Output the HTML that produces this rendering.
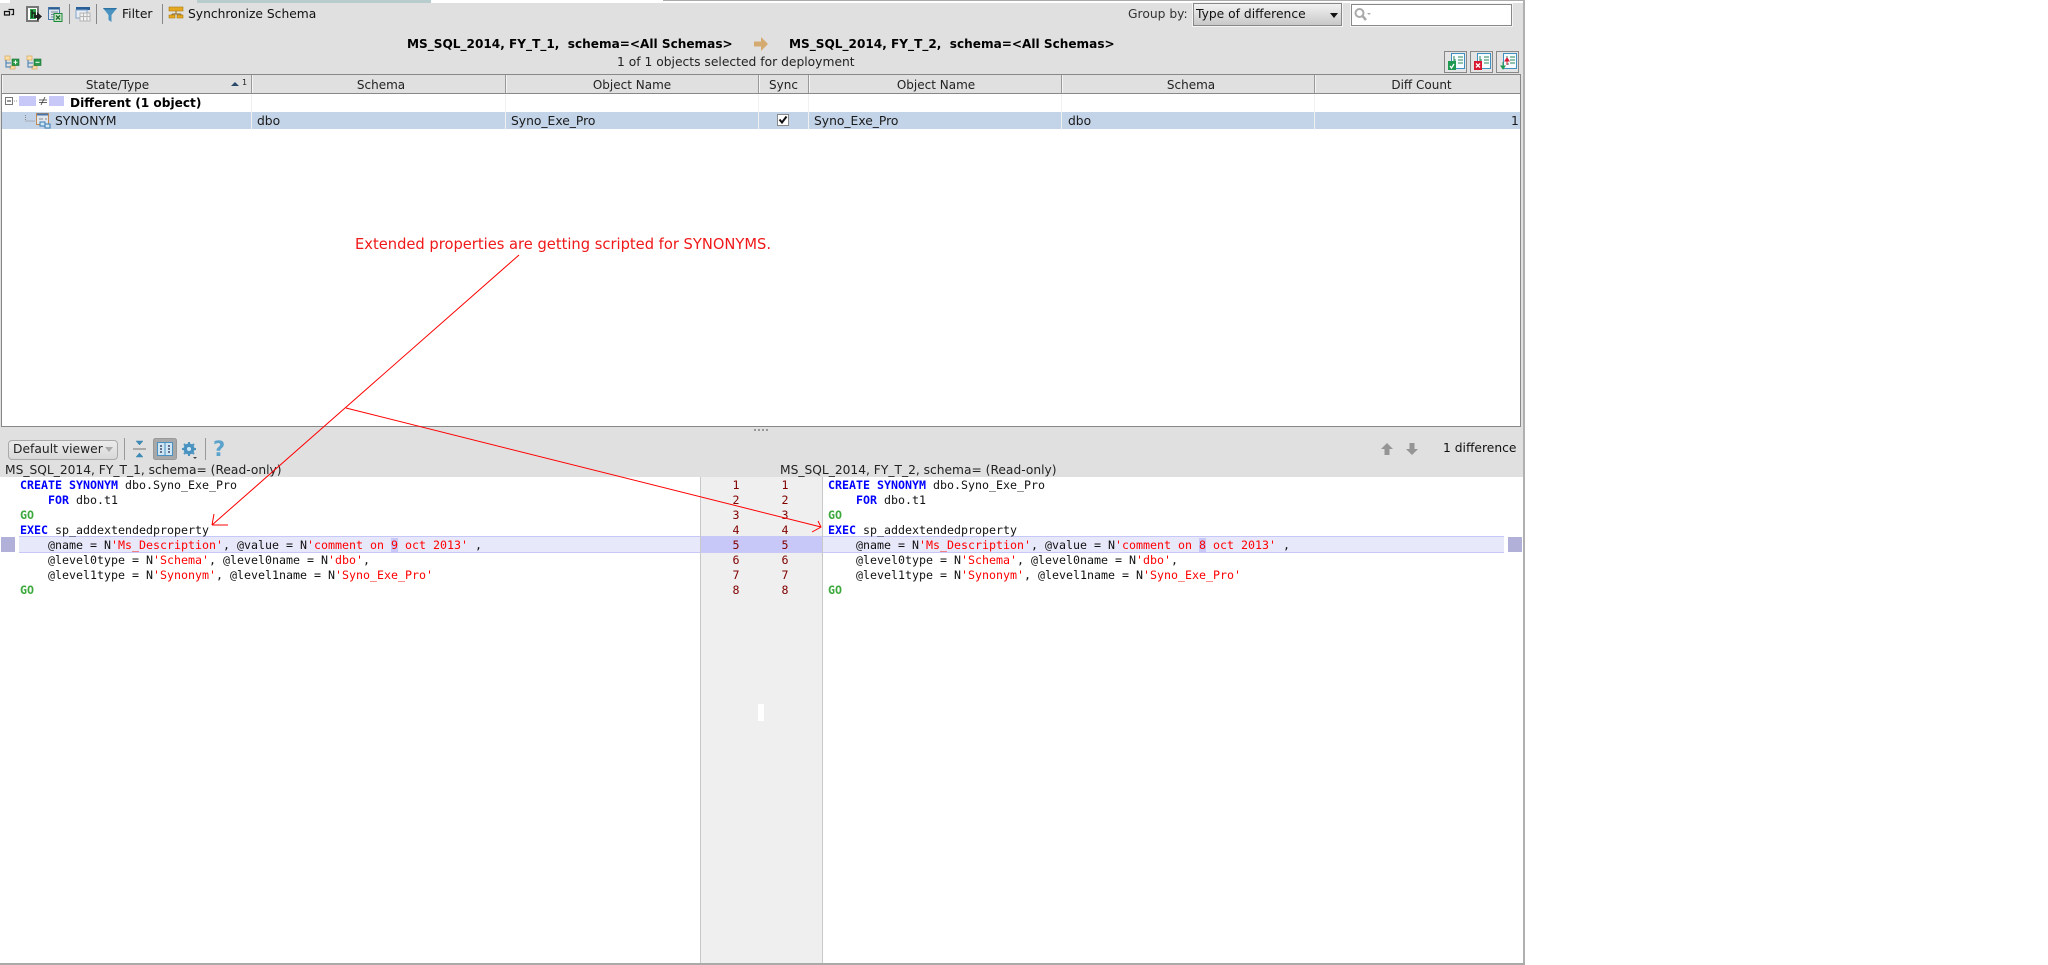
<!DOCTYPE html>
<html><head><meta charset="utf-8"><style>
html,body{margin:0;padding:0;background:#fff;width:2048px;height:965px;overflow:hidden}
div,span.a,svg.a{position:absolute}
.t{position:absolute;font-family:"DejaVu Sans",sans-serif;font-size:12px;line-height:18px;height:18px;white-space:pre;color:#1a1a1a}
.b{font-weight:bold;color:#000}
.h{position:absolute;top:75px;height:18px;background:#e0e0e0;border-right:1px solid #999;box-shadow:inset 1px 0 #f4f4f4;text-align:center;font-family:"DejaVu Sans",sans-serif;font-size:12px;line-height:21px;color:#222}
.c{position:absolute;font-family:"DejaVu Sans Mono","Liberation Mono",monospace;font-size:11.63px;line-height:15px;height:15px;white-space:pre;color:#111}
.k{color:#00f;font-weight:bold}.g{color:#3aa83a;font-weight:bold}.s{color:#f00}.m{background:#c8c8f8}
.n{position:absolute;font-family:"DejaVu Sans Mono",monospace;font-size:11.63px;line-height:15px;color:#800000;width:10px;text-align:center}
.v{position:absolute;width:1px;background:#f1f1f1}
</style></head><body>
<div style="left:0;top:0;width:2048px;height:965px;background:#fff"></div>
<div style="left:663px;top:0;width:862px;height:1px;background:#aaa"></div>
<div style="left:10px;top:0;width:187px;height:3px;background:#e0e0e0"></div>
<div style="left:197px;top:0;width:234px;height:3px;background:#b7cccc"></div>
<div style="left:0;top:3px;width:1523px;height:425px;background:#e0e0e0"></div>
<div style="left:1523px;top:0;width:2px;height:965px;background:#b0b0b0"></div>
<div style="left:0;top:963px;width:1525px;height:2px;background:#aaa"></div>

<!-- toolbar icons -->
<svg class="a" style="left:0;top:0" width="330" height="74" viewBox="0 0 330 74" fill="none">
<path d="M8.500 9.500h5v5h-2M4.500 11.500h5v3.500h-5z" stroke="#111" stroke-width="1.200"/>
<rect x="27" y="7" width="11" height="14" fill="#fff" stroke="#777" stroke-width="2"/>
<rect x="30" y="9" width="6" height="10" fill="#2fa14a"/>
<path d="M32 10v8M32 13h3v4" stroke="#111" stroke-width="1.200"/>
<path d="M34 15h3v-3l5 4.500-5 4.500v-3h-3z" fill="#222"/>
<rect x="48.500" y="7.500" width="11" height="12" fill="#dde5ee" stroke="#4a76a8"/>
<path d="M49 8.500h10" stroke="#2c5d93" stroke-width="2"/>
<path d="M51 12h7M51 14.500h7M51 17h7" stroke="#789"/>
<rect x="54" y="13.500" width="8" height="8" fill="#c5e3c5" stroke="#1c8a3c"/>
<path d="M56 15.500l4 4M60 15.500l-4 4" stroke="#1c6a2c" stroke-width="1.300"/>
<rect x="69" y="4" width="1" height="20" fill="#888"/>
<rect x="76" y="7" width="14" height="3" fill="#295f99"/>
<rect x="76" y="10" width="11" height="8" fill="#e8eef5" stroke="#7fa3c8"/>
<rect x="80" y="13" width="10" height="8" fill="#f2f2f2" stroke="#b5b5b5"/>
<path d="M83.500 13v8M87 13v8M80 16.500h10" stroke="#b5b5b5"/>
<rect x="96" y="4" width="1" height="20" fill="#888"/>
<path d="M103 8h14l-5.500 7v7l-3-2v-5z" fill="#4a93c0"/>
<path d="M103 8h14l-1 1.500h-12z" fill="#2b73a3"/>
<rect x="162" y="4" width="1" height="20" fill="#888"/>
<rect x="169" y="7" width="14" height="4" fill="#e6a820" stroke="#a87a10" stroke-width=".6"/>
<path d="M176 11v3M172 14h9M172 14v1M181 14v1" stroke="#8a6a20"/>
<rect x="169" y="15" width="6" height="3" fill="#e6a820" stroke="#a87a10" stroke-width=".6"/>
<rect x="177" y="15" width="6" height="3" fill="#e6a820" stroke="#a87a10" stroke-width=".6"/>
<!-- tree expand icons -->
<path d="M5 56h5v4H5zM10 66h5v3H10z" fill="#fde0a8" stroke="#d8a860" stroke-width=".7"/>
<path d="M6 60v7h5M6 63h5" stroke="#3a7ab0"/>
<rect x="12" y="59" width="7" height="6.500" fill="#2a9a4a" stroke="#1a7030" stroke-width=".6"/>
<path d="M13.500 62.300h4M15.500 60.300v4" stroke="#fff"/>
<path d="M27 56h5v4h-5zM32 66h5v3h-5z" fill="#fde0a8" stroke="#d8a860" stroke-width=".7"/>
<path d="M28 60v7h5M28 63h5" stroke="#3a7ab0"/>
<rect x="34" y="59" width="7" height="6.500" fill="#2a9a4a" stroke="#1a7030" stroke-width=".6"/>
<path d="M35.500 62.300h4" stroke="#fff"/>
</svg>

<div class="t" style="left:122px;top:5px;font-size:12.300px;color:#111">Filter</div>
<div class="t" style="left:188px;top:5px;font-size:12.300px;color:#111">Synchronize Schema</div>
<div class="t" style="left:1128px;top:5px;font-size:12.300px;color:#333">Group by:</div>
<div style="left:1193px;top:3px;width:147px;height:21px;border:1px solid #888;background:linear-gradient(#f2f2f2,#c8c8c8);box-shadow:0 0 0 1px #f4f4f4"></div>
<div class="t" style="left:1196px;top:5px;font-size:12.300px;color:#111">Type of difference</div>
<svg class="a" style="left:1329px;top:12px" width="10" height="6"><path d="M1 1h8L5 6z" fill="#111"/></svg>
<div style="left:1351px;top:4px;width:159px;height:20px;border:1px solid #888;background:#fff;box-shadow:0 0 0 1px #f4f4f4"></div>
<svg class="a" style="left:1353px;top:7px" width="20" height="15" fill="none"><circle cx="6.500" cy="6" r="4" stroke="#aaa" stroke-width="2"/><path d="M9.500 9l3.500 4" stroke="#aaa" stroke-width="2.500"/><path d="M14 6h4l-2 2z" fill="#aaa"/></svg>

<div class="t b" style="left:407px;top:35px;font-size:12.100px">MS_SQL_2014, FY_T_1,  schema=&lt;All Schemas&gt;</div>
<svg class="a" style="left:754px;top:37px" width="15" height="14"><path d="M0 4.500h7V0l7 7-7 7V9.500H0z" fill="#d5aa70"/></svg>
<div class="t b" style="left:789px;top:35px;font-size:12.100px">MS_SQL_2014, FY_T_2,  schema=&lt;All Schemas&gt;</div>
<div class="t" style="left:617px;top:53px;font-size:12.300px;color:#222">1 of 1 objects selected for deployment</div>

<!-- deploy buttons -->
<svg class="a" style="left:1443px;top:50px" width="78" height="24" fill="none">
<g fill="#e4e4e4" stroke="#888"><rect x="1.500" y="1.500" width="22" height="21"/><rect x="27.500" y="1.500" width="22" height="21"/><rect x="53.500" y="1.500" width="22" height="21"/></g>
<g fill="#f6fbff" stroke="#3f8fc0"><rect x="8.500" y="3.500" width="13" height="15"/><rect x="34.500" y="3.500" width="13" height="15"/><rect x="60.500" y="3.500" width="13" height="15"/></g>
<path d="M11 6v8h2M11 10h2M15 7h5M15 10h5M15 13h5M37 6v8h2M37 10h2M41 7h5M41 10h5M41 13h5M64 6v8h2M64 10h2M67 7h5M67 10h5M67 13h5" stroke="#2a8a5a"/>
<rect x="5" y="11" width="8" height="9" fill="#1f9a50"/><path d="M7 16l1.500 2 2.500-4" stroke="#fff" stroke-width="1.300"/>
<rect x="31" y="11" width="8" height="9" fill="#d81830"/><path d="M33 13.500l4 4M37 13.500l-4 4" stroke="#fff" stroke-width="1.300"/>
<path d="M60 12v6M58 16h4l-2 3z" fill="#1f9a50" stroke="#1f9a50"/><path d="M64 15v-6M62 11h4l-2-3z" fill="#d81830" stroke="#d81830"/>
</svg>

<!-- table -->
<div style="left:1px;top:74px;width:1518px;height:351px;background:#fff;border:1px solid #888;box-sizing:content-box"></div>
<div style="left:2px;top:93px;width:1518px;height:1px;background:#888"></div>
<div class="h" style="left:2px;width:249px;text-indent:-18px">State/Type</div>
<div class="h" style="left:252px;width:253px;text-indent:5px">Schema</div>
<div class="h" style="left:506px;width:252px">Object Name</div>
<div class="h" style="left:759px;width:49px">Sync</div>
<div class="h" style="left:809px;width:252px;text-indent:2px">Object Name</div>
<div class="h" style="left:1062px;width:252px;text-indent:6px">Schema</div>
<div class="h" style="left:1315px;width:205px;border-right:0;text-indent:8px">Diff Count</div>
<svg class="a" style="left:231px;top:78px" width="16" height="11"><path d="M0 8h8L4 4z" fill="#2a4a6a"/><text x="11" y="7" font-family="DejaVu Sans" font-size="8" fill="#222">1</text></svg>
<div style="left:2px;top:112px;width:1518px;height:17px;background:#c3d3e8"></div>
<div class="v" style="left:251px;top:94px;height:36px"></div>
<div class="v" style="left:505px;top:94px;height:36px"></div>
<div class="v" style="left:758px;top:94px;height:36px"></div>
<div class="v" style="left:808px;top:94px;height:36px"></div>
<div class="v" style="left:1061px;top:94px;height:36px"></div>
<div class="v" style="left:1314px;top:94px;height:36px"></div>

<svg class="a" style="left:4px;top:95px" width="60" height="34" fill="none">
<rect x="1.500" y="2.500" width="7" height="7" fill="#fff" stroke="#777"/><path d="M3 6h4" stroke="#333"/>
<path d="M10 6h4" stroke="#999" stroke-dasharray="1 1"/>
<rect x="15" y="1" width="17" height="10" fill="#c8c8f8"/>
<rect x="45" y="1" width="17" height="10" fill="#c8c8f8"/>
<path d="M35 5h8M35 7.500h8M37 10l4-8" stroke="#333" stroke-width=".8"/>
<path d="M21.500 20v6h9" stroke="#888" stroke-dasharray="1 1"/>
</svg>
<svg class="a" style="left:36px;top:113px" width="15" height="16" fill="none">
<rect x=".5" y=".5" width="12" height="11" fill="#dfe6ee" stroke="#c08a50"/><path d="M1 1.500h11" stroke="#4a76a8" stroke-width="2"/>
<path d="M3 6h4M9 6h2" stroke="#888"/>
<rect x="4" y="9" width="5" height="4" fill="#cfe6f5" stroke="#3a7ab0"/><rect x="9" y="11" width="5" height="4" fill="#cfe6f5" stroke="#3a7ab0"/>
</svg>
<div class="t b" style="left:70px;top:94px;font-size:12.150px">Different (1 object)</div>
<div class="t" style="left:55px;top:112px;font-size:12.300px">SYNONYM</div>
<div class="t" style="left:257px;top:112px;font-size:12.300px">dbo</div>
<div class="t" style="left:511px;top:112px;font-size:12.300px">Syno_Exe_Pro</div>
<svg class="a" style="left:777px;top:114px" width="13" height="13" fill="none"><rect x=".5" y=".5" width="11" height="11" fill="#fff" stroke="#888"/><path d="M2.500 5.500l2.500 3 4.500-6" stroke="#111" stroke-width="2"/></svg>
<div class="t" style="left:814px;top:112px;font-size:12.300px">Syno_Exe_Pro</div>
<div class="t" style="left:1068px;top:112px;font-size:12.300px">dbo</div>
<div class="t" style="left:1511px;top:112px;font-size:12.300px">1</div>

<!-- lower toolbar -->
<div style="left:0;top:428px;width:1523px;height:49px;background:#e0e0e0"></div>
<svg class="a" style="left:754px;top:429px" width="16" height="3"><path d="M0 1h2M4 1h2M8 1h2M12 1h2" stroke="#999" stroke-width="2"/></svg>
<div style="left:8px;top:440px;width:108px;height:18px;border:1px solid #aaa;border-radius:4px;background:linear-gradient(#ececec,#d8d8d8)"></div>
<div class="t" style="left:13px;top:440px;font-size:12.300px;color:#222">Default viewer</div>
<svg class="a" style="left:105px;top:447px" width="10" height="6"><path d="M0 0h8L4 5z" fill="#aaa"/></svg>
<svg class="a" style="left:120px;top:436px" width="110" height="26" fill="none">
<rect x="4" y="2" width="1" height="22" fill="#999"/>
<path d="M13 13h13" stroke="#999" stroke-width="1.500"/>
<path d="M16 5l3.500 4L23 5z" fill="#3c8ab5" stroke="#3c8ab5" stroke-width=".5"/>
<path d="M16 21l3.500-4 3.500 4z" fill="#3c8ab5" stroke="#3c8ab5" stroke-width=".5"/>
<rect x="33.500" y="2.500" width="23" height="21" rx="2" fill="#a8a8a8" stroke="#999"/>
<rect x="37.500" y="6.500" width="15" height="13" fill="#cfe6f5" stroke="#4a90c0"/>
<path d="M45 7v12" stroke="#4a90c0"/>
<path d="M41 9v8M49 9v8" stroke="#224" stroke-width="1.200" stroke-dasharray="2 1"/>
<circle cx="69" cy="13" r="4.500" fill="#4a93c0" stroke="#4a93c0" stroke-width="2"/>
<path d="M69 6v14M62 13h14M64 8l10 10M74 8l-10 10" stroke="#4a93c0" stroke-width="2"/>
<circle cx="69" cy="13" r="2" fill="#cfe6f5"/>
<path d="M73 21h4l-2 2z" fill="#444"/>
<rect x="85" y="2" width="1" height="22" fill="#999"/>
</svg>
<div class="t" style="left:213px;top:438px;font-size:21px;line-height:23px;height:23px;font-weight:bold;color:#5ba3cc">?</div>
<svg class="a" style="left:1380px;top:442px" width="40" height="14"><path d="M7 1l6 6H9.500v6h-5V7H1z" fill="#959595"/><path d="M32 13l6-6h-3.500V1h-5v6H26z" fill="#959595"/></svg>
<div class="t" style="left:1443px;top:439px;font-size:12.300px;color:#111">1 difference</div>
<div class="t" style="left:5px;top:461px;font-size:12.250px;color:#222">MS_SQL_2014, FY_T_1, schema= (Read-only)</div>
<div class="t" style="left:780px;top:461px;font-size:12.250px;color:#222">MS_SQL_2014, FY_T_2, schema= (Read-only)</div>

<!-- gutter -->
<div style="left:700px;top:477px;height:486px;background:#efefef;border-left:1px solid #c8c8c8;border-right:1px solid #c8c8c8;box-sizing:border-box;width:123px"></div>
<div style="left:19px;top:536px;width:681px;height:15px;background:#e8e8fb;border-top:1px solid #c8c8f8;border-bottom:1px solid #c8c8f8"></div>
<div style="left:823px;top:536px;width:681px;height:15px;background:#e8e8fb;border-top:1px solid #c8c8f8;border-bottom:1px solid #c8c8f8"></div>
<div style="left:701px;top:536px;width:121px;height:17px;background:#c8c8f8"></div>
<div style="left:1px;top:537px;width:14px;height:15px;background:#b0b0d8"></div>
<div style="left:1508px;top:537px;width:14px;height:15px;background:#b0b0d8"></div>
<div style="left:758px;top:704px;width:6px;height:17px;background:#fff"></div>

<div class="n" style="left:731px;top:478px">1</div><div class="n" style="left:780px;top:478px">1</div>
<div class="n" style="left:731px;top:493px">2</div><div class="n" style="left:780px;top:493px">2</div>
<div class="n" style="left:731px;top:508px">3</div><div class="n" style="left:780px;top:508px">3</div>
<div class="n" style="left:731px;top:523px">4</div><div class="n" style="left:780px;top:523px">4</div>
<div class="n" style="left:731px;top:538px">5</div><div class="n" style="left:780px;top:538px">5</div>
<div class="n" style="left:731px;top:553px">6</div><div class="n" style="left:780px;top:553px">6</div>
<div class="n" style="left:731px;top:568px">7</div><div class="n" style="left:780px;top:568px">7</div>
<div class="n" style="left:731px;top:583px">8</div><div class="n" style="left:780px;top:583px">8</div>

<!-- code left -->
<div class="c" style="left:20px;top:478px"><span class="k">CREATE SYNONYM</span> dbo.Syno_Exe_Pro</div>
<div class="c" style="left:20px;top:493px">    <span class="k">FOR</span> dbo.t1</div>
<div class="c" style="left:20px;top:508px"><span class="g">GO</span></div>
<div class="c" style="left:20px;top:523px"><span class="k">EXEC</span> sp_addextendedproperty</div>
<div class="c" style="left:20px;top:538px">    @name = N<span class="s">'Ms_Description'</span>, @value = N<span class="s">'comment on <span class="m">9</span> oct 2013'</span> ,</div>
<div class="c" style="left:20px;top:553px">    @level0type = N<span class="s">'Schema'</span>, @level0name = N<span class="s">'dbo'</span>,</div>
<div class="c" style="left:20px;top:568px">    @level1type = N<span class="s">'Synonym'</span>, @level1name = N<span class="s">'Syno_Exe_Pro'</span></div>
<div class="c" style="left:20px;top:583px"><span class="g">GO</span></div>
<!-- code right -->
<div class="c" style="left:828px;top:478px"><span class="k">CREATE SYNONYM</span> dbo.Syno_Exe_Pro</div>
<div class="c" style="left:828px;top:493px">    <span class="k">FOR</span> dbo.t1</div>
<div class="c" style="left:828px;top:508px"><span class="g">GO</span></div>
<div class="c" style="left:828px;top:523px"><span class="k">EXEC</span> sp_addextendedproperty</div>
<div class="c" style="left:828px;top:538px">    @name = N<span class="s">'Ms_Description'</span>, @value = N<span class="s">'comment on <span class="m">8</span> oct 2013'</span> ,</div>
<div class="c" style="left:828px;top:553px">    @level0type = N<span class="s">'Schema'</span>, @level0name = N<span class="s">'dbo'</span>,</div>
<div class="c" style="left:828px;top:568px">    @level1type = N<span class="s">'Synonym'</span>, @level1name = N<span class="s">'Syno_Exe_Pro'</span></div>
<div class="c" style="left:828px;top:583px"><span class="g">GO</span></div>

<!-- annotations -->
<div class="t" style="left:355px;top:236px;font-size:14.700px;color:#f01818">Extended properties are getting scripted for SYNONYMS.</div>
<svg class="a" style="left:0;top:0" width="2048" height="965" fill="none" stroke="#f00" stroke-width="1">
<path d="M519 255L212 525M212 525H228M212 525L214 514"/>
<path d="M346 408L821 527M818 521L821 527L812 532"/>
</svg>
</body></html>
